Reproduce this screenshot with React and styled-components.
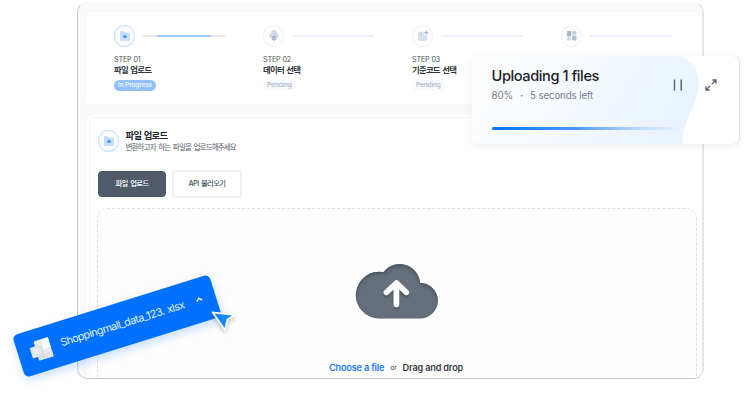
import React from 'react';
import styled, { createGlobalStyle } from 'styled-components';

const Global = createGlobalStyle`
  * { box-sizing: border-box; }
  body { margin: 0; background: #fff; font-family: Inter, "Noto Sans CJK KR", sans-serif; }
`;

const Stage = styled.main`
  position: relative;
  width: 750px;
  height: 400px;
  overflow: hidden;
  padding: 2px 0 0 77px;
  white-space: nowrap;
`;

const Window = styled.section`
  display: flex;
  flex-direction: column;
  gap: 11px;
  width: 627px;
  height: 377px;
  padding: 9px 0 0 9px;
  overflow: hidden;
  background: #f9f9fa;
  border: 1px solid #c9cacb;
  border-top-color: #fafafa;
  border-right: 2px solid #e5e5e6;
  border-radius: 10px;
`;

const Steps = styled.div`
  display: flex;
  flex: none;
  height: 92px;
  padding: 12.5px 0 0 27px;
  background: #fff;
  border-radius: 3px 0 0 3px;
`;

const Step = styled.div`
  display: flex;
  flex: none;
  flex-direction: column;
  align-items: flex-start;
  width: 149px;
`;

const StepTop = styled.div`
  display: flex;
  align-items: center;
  gap: 7.5px;
  height: 22px;
`;

const IconRing = styled.div`
  display: grid;
  flex: none;
  place-items: center;
  width: 21px;
  height: 22px;
  border: 1.3px solid ${(p) => (p.$active ? '#c3dfff' : '#f1f3f6')};
  border-radius: 50%;
  background: #fff;
  svg { display: block; }
`;

const Track = styled.div`
  width: 82px;
  height: 2px;
  padding: 0 14px;
  background: ${(p) => (p.$active ? '#e8eaee' : '#ebf0f6')};
`;

const TrackFill = styled.div`
  height: 100%;
  background: #9ccafd;
`;

const StepLabel = styled.span`
  margin-top: 8px;
  font-size: 7.2px;
  line-height: 10px;
  letter-spacing: -0.15px;
  color: #4a525c;
`;

const StepTitle = styled.span`
  font-size: 8.4px;
  font-weight: 700;
  line-height: 11px;
  letter-spacing: -0.75px;
  word-spacing: 1.2px;
  color: #30363d;
`;

const Badge = styled.span`
  height: 11px;
  margin-top: 4.5px;
  padding: 0 4px;
  border-radius: 6px;
  font-size: 6.6px;
  font-weight: 500;
  line-height: 11px;
  letter-spacing: -0.15px;
  background: ${(p) => (p.$active ? '#91c0fc' : '#f8fafd')};
  color: ${(p) => (p.$active ? '#f3f9ff' : '#a9b6c7')};
`;

const UploadCard = styled.div`
  display: flex;
  flex: 1;
  flex-direction: column;
  min-height: 0;
  padding: 13px 5px 0 9px;
  background: #fff;
  border: 2px solid #fff;
  border-right: 0;
  border-bottom: 0;
  border-radius: 6px 0 0 0;
  box-shadow: inset 1px 1px 0 #f3f4f6;
`;

const Heading = styled.header`
  display: flex;
  gap: 6.5px;
  height: 24px;
`;

const HeadingText = styled.div`
  display: flex;
  flex-direction: column;
`;

const Title = styled.h2`
  margin: -1.5px 0 0;
  font-size: 9.4px;
  line-height: 13px;
  letter-spacing: -0.75px;
  word-spacing: 1px;
  color: #22272d;
`;

const Subtitle = styled.p`
  margin: 0;
  font-size: 7.5px;
  line-height: 12px;
  letter-spacing: -0.84px;
  word-spacing: 1.2px;
  color: #59616b;
`;

const Buttons = styled.div`
  display: flex;
  gap: 6px;
  margin-top: 16px;
`;

const Button = styled.button`
  width: ${(p) => (p.$primary ? '68px' : '70px')};
  height: ${(p) => (p.$primary ? '26px' : '28px')};
  margin: ${(p) => (p.$primary ? '1px 0' : '0')};
  padding: 0;
  border: ${(p) => (p.$primary ? '1px solid #465361' : '2px solid #edf0f5')};
  border-radius: 4px;
  background: ${(p) => (p.$primary ? '#4f5b69' : '#fff')};
  color: ${(p) => (p.$primary ? '#fff' : '#4d5661')};
  font: 500 7.4px/20px Inter, "Noto Sans CJK KR", sans-serif;
  letter-spacing: -0.65px;
  word-spacing: 1.1px;
`;

const DropZone = styled.div`
  display: flex;
  flex: 1;
  flex-direction: column;
  align-items: center;
  margin-top: 10px;
  margin-left: -1px;
  padding: 53px 2px 0 0;
  border: 1.5px dashed #e0e1e3;
  border-bottom: 0;
  border-radius: 10px 10px 0 0;
  background: #fdfdfd;
`;

const DropText = styled.p`
  display: flex;
  align-items: center;
  gap: 6px;
  margin: 41.5px 0 0;
  font-size: 9.2px;
  line-height: 14px;
  font-weight: 600;
  letter-spacing: -0.19px;
  color: #3b4149;
`;

const Choose = styled.a`
  color: #1a7cfb;
`;

const Or = styled.span`
  font-size: 6.8px;
  font-weight: 400;
`;

const Toast = styled.aside`
  position: absolute;
  left: 472px;
  top: 56px;
  display: flex;
  width: 267px;
  height: 88px;
  padding: 10px 0 0 19.5px;
  border-radius: 6px;
  background: #fff;
  box-shadow: 0 2px 7px rgba(60, 75, 95, 0.1), 1px 0 0 #e6e8ea;
`;

const Wave = styled.svg`
  position: absolute;
  left: 0;
  top: 0;
`;

const ToastBody = styled.div`
  position: relative;
  width: 181px;
`;

const ToastTitle = styled.h3`
  margin: 0;
  font-size: 14.6px;
  font-weight: 500;
  line-height: 20px;
  letter-spacing: -0.41px;
  color: #1b2028;
`;

const ToastMeta = styled.p`
  display: flex;
  gap: 7px;
  margin: 1px 0 0;
  font-size: 9.8px;
  line-height: 17px;
  letter-spacing: -0.16px;
  color: #75808e;
`;

const Dot = styled.span`
  font-weight: 700;
`;

const Progress = styled.div`
  width: 189px;
  height: 3px;
  margin-top: 23px;
  border-radius: 2px;
  background: linear-gradient(90deg, #0874ff, #4b99ff 45%, rgba(150, 198, 255, 0.65) 75%, rgba(220, 236, 255, 0));
`;

const ToastActions = styled.div`
  position: relative;
  display: flex;
  gap: 23px;
  padding-top: 13px;
`;

const FileChip = styled.div`
  position: absolute;
  left: 14px;
  top: 304px;
  display: flex;
  align-items: center;
  width: 206px;
  height: 43.5px;
  padding-left: 12px;
  border-radius: 5px;
  background: #0070ff;
  color: #e2f0ff;
  transform: rotate(-17.3deg);
  box-shadow: 0 4px 10px rgba(0, 112, 255, 0.22);
`;

const FileName = styled.span`
  width: 141px;
  margin-left: 8px;
  font-size: 10.8px;
  line-height: 16px;
  letter-spacing: -0.58px;
  word-spacing: 1px;
`;

const Pointer = styled.svg`
  position: absolute;
  left: 205px;
  top: 305px;
  filter: drop-shadow(0 2px 2px rgba(50, 65, 90, 0.35));
`;

const FolderIcon = () => (
  <svg width="12" height="12" viewBox="0 0 12 12">
    <path d="M1 2q0-1 1-1h2.5l1.4 1.4H10q1 0 1 1V10q0 1-1 1H2q-1 0-1-1z" fill="#c5dfff" />
    <path d="M6 4.5 8 6.6 7.5 7.8H4.5L4 6.6z" fill="#3d91fb" />
  </svg>
);

const DataIcon = () => (
  <svg width="12" height="13" viewBox="0 0 12 13">
    <path d="M3 4a3 3 0 0 1 6 0 2.7 2.7 0 0 1 .3 5H2.7A2.7 2.7 0 0 1 3 4z" fill="#d0dae6" />
    <circle cx="6" cy="9.3" r="2.4" fill="#9fb1c7" />
    <path d="m4.9 9.3.8.8 1.4-1.6" fill="none" stroke="#fff" strokeWidth=".6" />
  </svg>
);

const CodeIcon = () => (
  <svg width="12" height="12" viewBox="0 0 12 12">
    <path d="M2 1.7h4.6v3.7h3.7V10q0 .8-.8.8H2q-.8 0-.8-.8V2.5q0-.8.8-.8z" fill="#d3dde8" />
    <path d="M3.2 9V6.8M5.4 9V5M7.7 9V7.4" stroke="#fff" strokeWidth=".5" />
    <path d="M9.3.7v4M7.3 2.7h4" stroke="#a6b6ca" strokeWidth="1.2" />
  </svg>
);

const GridIcon = () => (
  <svg width="12" height="12" viewBox="0 0 12 12">
    <rect x="1" y="1" width="4.3" height="5.4" rx="1" fill="#a6b5c8" />
    <rect x="6.2" y="1" width="4.3" height="3.7" rx="1" fill="#c3cfdd" />
    <rect x="1" y="7.5" width="4.3" height="3" rx="1" fill="#cdd7e3" />
    <rect x="6.2" y="5.6" width="4.3" height="5" rx="1" fill="#b2c0d1" />
  </svg>
);

const CloudIcon = () => (
  <svg width="83" height="57" viewBox="0 0 83 57">
    <defs>
      <filter id="inner" x="-10%" y="-10%" width="120%" height="120%">
        <feGaussianBlur in="SourceAlpha" stdDeviation="2" result="b" />
        <feOffset in="b" dy="2" result="o" />
        <feComposite in="SourceAlpha" in2="o" operator="out" result="edge" />
        <feFlood floodColor="#303b49" floodOpacity=".75" />
        <feComposite in2="edge" operator="in" result="shade" />
        <feMerge><feMergeNode in="SourceGraphic" /><feMergeNode in="shade" /></feMerge>
      </filter>
      <filter id="soft" x="-30%" y="-30%" width="160%" height="170%">
        <feDropShadow dx="0" dy="2" stdDeviation="1.3" floodColor="#2e3845" floodOpacity=".6" />
      </filter>
    </defs>
    <path filter="url(#inner)" fill="#66707d" d="M24 56.5A23.4 23.4 0 1 1 28.5 10.1 20.5 20.5 0 0 1 65.2 20.9 17.8 17.8 0 0 1 65 56.5z" />
    <path filter="url(#soft)" d="M41.4 42.5V21M31.5 30.3l9.9-9.3 9.9 9.3" fill="none" stroke="#fff" strokeWidth="5.6" strokeLinecap="round" strokeLinejoin="round" />
  </svg>
);

const SheetIcon = () => (
  <svg width="24" height="22" viewBox="0 0 24 22">
    <rect x="6.5" y="1" width="15" height="20" rx="1" fill="#e9ecf0" />
    <path d="M14 1h6.5q1 0 1 1v9H14z" fill="#fafbfc" />
    <path d="M6.5 16h15v4q0 1-1 1h-13q-1 0-1-1z" fill="#dfe4ea" />
    <path d="M7 7h6v11H7z" fill="#c5ccd5" opacity=".5" />
    <rect x="1" y="6" width="11" height="11" rx="1" fill="#e1e5ea" />
    <path d="m4.2 8.7 4.6 5.7m0-5.7-4.6 5.7" stroke="#f7f9fb" strokeWidth="1.1" />
  </svg>
);

const steps = [
  { label: 'STEP 01', title: '파일 업로드', status: 'In Progress', icon: <FolderIcon />, active: true },
  { label: 'STEP 02', title: '데이터 선택', status: 'Pending', icon: <DataIcon /> },
  { label: 'STEP 03', title: '기준코드 선택', status: 'Pending', icon: <CodeIcon /> },
  { icon: <GridIcon /> },
];

export default function App() {
  return (
    <Stage>
      <Global />
      <Window>
        <Steps>
          {steps.map((s, i) => (
            <Step key={i}>
              <StepTop>
                <IconRing $active={s.active}>{s.icon}</IconRing>
                <Track $active={s.active}>{s.active && <TrackFill />}</Track>
              </StepTop>
              {s.label && (
                <>
                  <StepLabel>{s.label}</StepLabel>
                  <StepTitle>{s.title}</StepTitle>
                  <Badge $active={s.active}>{s.status}</Badge>
                </>
              )}
            </Step>
          ))}
        </Steps>
        <UploadCard>
          <Heading>
            <IconRing $active><FolderIcon /></IconRing>
            <HeadingText>
              <Title>파일 업로드</Title>
              <Subtitle>변환하고자 하는 파일을 업로드해주세요</Subtitle>
            </HeadingText>
          </Heading>
          <Buttons>
            <Button $primary>파일 업로드</Button>
            <Button>API 불러오기</Button>
          </Buttons>
          <DropZone>
            <CloudIcon />
            <DropText>
              <Choose>Choose a file</Choose>
              <Or>or</Or>
              <span>Drag and drop</span>
            </DropText>
          </DropZone>
        </UploadCard>
      </Window>

      <Toast>
        <Wave width="267" height="88" viewBox="0 0 267 88">
          <defs>
            <linearGradient id="wave" x1="0" y1="0" x2="1" y2="0.25">
              <stop offset="0" stopColor="#fff" />
              <stop offset=".5" stopColor="#f6faff" />
              <stop offset="1" stopColor="#e9f3ff" />
            </linearGradient>
          </defs>
          <path d="M6 0H208C220 4 227 13 226.5 28C226 50 209 67 211 88H6Q0 88 0 82V6Q0 0 6 0z" fill="url(#wave)" />
        </Wave>
        <ToastBody>
          <ToastTitle>Uploading 1 files</ToastTitle>
          <ToastMeta><span>80%</span><Dot>·</Dot><span>5 seconds left</span></ToastMeta>
          <Progress />
        </ToastBody>
        <ToastActions>
          <svg width="9" height="12" viewBox="0 0 9 12">
            <path d="M1.5 .5v11M8.2 .5v11" stroke="#56616e" strokeWidth="1.4" />
          </svg>
          <svg width="12" height="12" viewBox="0 0 12 12">
            <path d="M7 5 11 1M7.3 1H11v3.7M5 7 1 11M1 7.3V11h3.7" fill="none" stroke="#56616e" strokeWidth="1.3" />
          </svg>
        </ToastActions>
      </Toast>

      <FileChip>
        <SheetIcon />
        <FileName>Shoppingmall_data_123. xlsx</FileName>
        <svg width="9" height="7" viewBox="0 0 9 7">
          <path d="m1.5 4.5 2.7-2.7 2.7 2.7" fill="none" stroke="#fff" strokeWidth="1.4" />
        </svg>
      </FileChip>
      <Pointer width="36" height="34" viewBox="0 0 36 34">
        <path d="M7.5 7.3 29.5 10 22.5 14.5 20 25z" fill="#1688f8" stroke="#fff" strokeWidth="1.7" strokeLinejoin="round" />
      </Pointer>
    </Stage>
  );
}
